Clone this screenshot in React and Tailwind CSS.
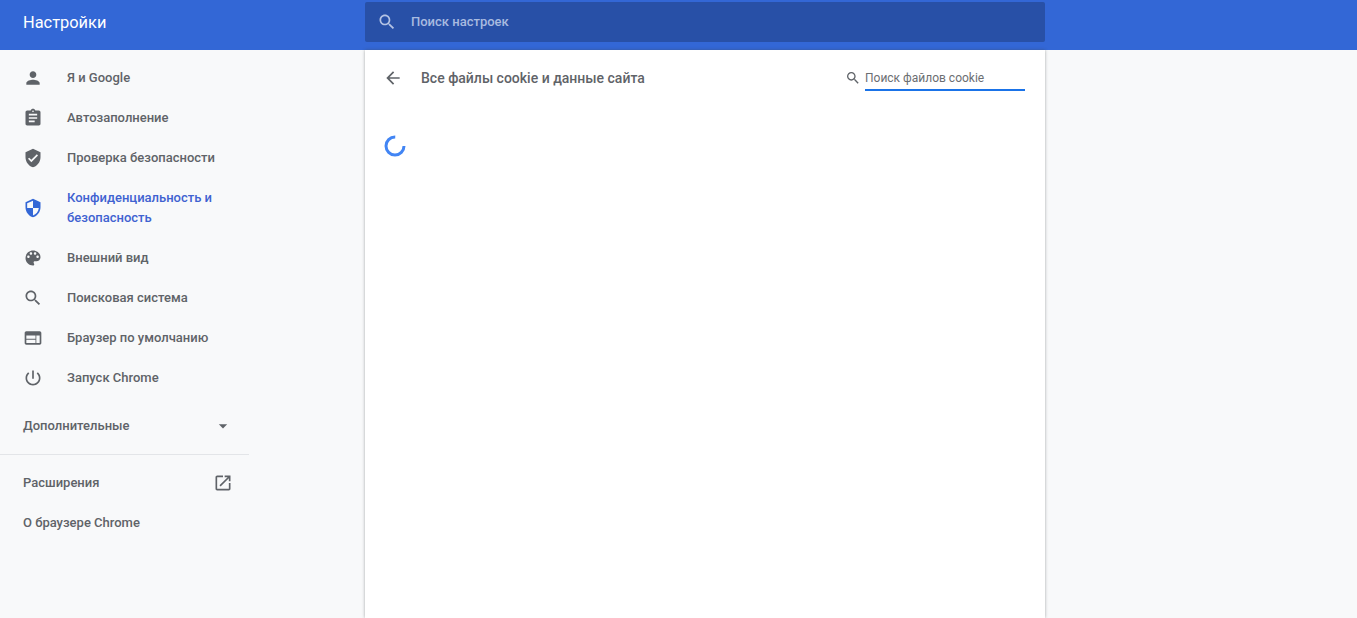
const paths = {
  person: 'M12 12c2.21 0 4-1.79 4-4s-1.79-4-4-4-4 1.79-4 4 1.79 4 4 4zm0 2c-2.67 0-8 1.34-8 4v2h16v-2c0-2.66-5.33-4-8-4z',
  assignment: 'M19 3h-4.18C14.4 1.84 13.3 1 12 1c-1.3 0-2.4.84-2.82 2H5c-1.1 0-2 .9-2 2v14c0 1.1.9 2 2 2h14c1.1 0 2-.9 2-2V5c0-1.1-.9-2-2-2zm-7 0c.55 0 1 .45 1 1s-.45 1-1 1-1-.45-1-1 .45-1 1-1zm2 14H7v-2h7v2zm3-4H7v-2h10v2zm0-4H7V7h10v2z',
  verified: 'M12 1L3 5v6c0 5.55 3.84 10.74 9 12 5.16-1.26 9-6.45 9-12V5l-9-4zm-2 16l-4-4 1.41-1.41L10 14.17l6.59-6.59L18 9l-8 8z',
  security: 'M12 1L3 5v6c0 5.55 3.84 10.74 9 12 5.16-1.26 9-6.45 9-12V5l-9-4zm0 10.99h7c-.53 4.12-3.28 7.79-7 8.94V12H5V6.3l7-3.11v8.8z',
  palette: 'M12 3c-4.97 0-9 4.03-9 9s4.03 9 9 9c.83 0 1.5-.67 1.5-1.5 0-.39-.15-.74-.39-1.01-.23-.26-.38-.61-.38-.99 0-.83.67-1.5 1.5-1.5H16c2.76 0 5-2.24 5-5 0-4.42-4.03-8-9-8zm-5.5 9c-.83 0-1.5-.67-1.5-1.5S5.67 9 6.5 9 8 9.67 8 10.5 7.33 12 6.5 12zm3-4C8.67 8 8 7.33 8 6.5S8.67 5 9.5 5s1.5.67 1.5 1.5S10.33 8 9.5 8zm5 0c-.83 0-1.5-.67-1.5-1.5S13.67 5 14.5 5s1.5.67 1.5 1.5S15.33 8 14.5 8zm3 4c-.83 0-1.5-.67-1.5-1.5S16.67 9 17.5 9s1.5.67 1.5 1.5-.67 1.5-1.5 1.5z',
  search: 'M15.5 14h-.79l-.28-.27C15.41 12.59 16 11.11 16 9.5 16 5.91 13.09 3 9.5 3S3 5.91 3 9.5 5.91 16 9.5 16c1.61 0 3.09-.59 4.23-1.57l.27.28v.79l5 4.99L20.49 19l-4.99-5zm-6 0C7.01 14 5 11.99 5 9.5S7.01 5 9.5 5 14 7.01 14 9.5 11.99 14 9.5 14z',
  web: 'M20 4H4c-1.1 0-1.99.9-1.99 2L2 18c0 1.1.9 2 2 2h16c1.1 0 2-.9 2-2V6c0-1.1-.9-2-2-2zm-5 14H4v-4h11v4zm0-5H4V9h11v4zm5 5h-4V9h4v9z',
  power: 'M13 3h-2v10h2V3zm4.83 2.17l-1.42 1.42C17.99 7.86 19 9.81 19 12c0 3.87-3.13 7-7 7s-7-3.13-7-7c0-2.19 1.01-4.14 2.58-5.42L6.17 5.17C4.23 6.82 3 9.26 3 12c0 4.97 4.03 9 9 9s9-4.03 9-9c0-2.74-1.23-5.18-3.17-6.83z',
  openNew: 'M19 19H5V5h7V3H5c-1.11 0-2 .9-2 2v14c0 1.1.89 2 2 2h14c1.1 0 2-.9 2-2v-7h-2v7zM14 3v2h3.59l-9.83 9.83 1.41 1.41L19 6.41V10h2V3h-7z',
  back: 'M20 11H7.83l5.59-5.59L12 4l-8 8 8 8 1.41-1.41L7.83 13H20v-2z',
  drop: 'M7 10l5 5 5-5z',
};

const Icon = ({ name, className }) => (
  <svg viewBox="0 0 24 24" className={className} fill="currentColor">
    <path d={paths[name]} />
  </svg>
);

const menu = [
  { icon: 'person', label: 'Я и Google' },
  { icon: 'assignment', label: 'Автозаполнение' },
  { icon: 'verified', label: 'Проверка безопасности' },
  { icon: 'security', label: 'Конфиденциальность и безопасность', active: true },
  { icon: 'palette', label: 'Внешний вид' },
  { icon: 'search', label: 'Поисковая система' },
  { icon: 'web', label: 'Браузер по умолчанию' },
  { icon: 'power', label: 'Запуск Chrome' },
];

const Sidebar = () => (
  <aside className="w-[365px] shrink-0 pt-2">
    <nav>
      {menu.map((item) => (
        <div
          key={item.label}
          className={`flex items-center pl-[23px] w-[249px] ${item.active ? 'h-[60px] text-[#3f62d1]' : 'h-10 text-[#5f6368]'}`}
        >
          <Icon name={item.icon} className={`w-5 h-5 shrink-0 ${item.active ? 'text-[#3367d6]' : 'text-[#5f6368]'}`} />
          <span className="ml-[24px] w-[160px] leading-5">{item.label}</span>
        </div>
      ))}
    </nav>
    <div className="w-[249px] mt-2 h-10 flex items-center justify-between pl-[23px] pr-[16px] text-[#5f6368]">
      <span>Дополнительные</span>
      <Icon name="drop" className="w-5 h-5 text-[#5f6368]" />
    </div>
    <div className="w-[249px] mt-2 border-t border-[#e3e5e8]" />
    <div className="w-[249px] mt-2 h-10 flex items-center justify-between pl-[23px] pr-[16px] text-[#5f6368]">
      <span>Расширения</span>
      <Icon name="openNew" className="w-5 h-5 text-[#5f6368]" />
    </div>
    <div className="w-[249px] h-10 flex items-center pl-[23px] text-[#5f6368]">О браузере Chrome</div>
  </aside>
);

export default function App() {
  return (
    <div className="h-[618px] overflow-hidden bg-[#f8f9fa] font-[Roboto,sans-serif] text-[13px] font-medium flex flex-col">
      <header className="h-[50px] shrink-0 bg-[#3367d6] flex items-start">
        <div className="w-[365px] shrink-0 pl-[23px] pt-[11px] text-white text-[16.4px] font-normal leading-6">Настройки</div>
        <div className="mt-[2px] w-[680px] h-10 rounded-[2px] bg-[#2850a7] flex items-center pl-[12px]">
          <Icon name="search" className="w-5 h-5 text-[#b4c3e4]" />
          <span className="ml-[14px] text-[#a9bbe0]">Поиск настроек</span>
        </div>
      </header>
      <div className="flex flex-1 min-h-0">
        <Sidebar />
        <main className="w-[680px] shrink-0 bg-white shadow-[0_0_3px_rgba(60,64,67,0.45)]">
          <div className="h-14 flex items-center pl-[18px] pr-5">
            <Icon name="back" className="w-5 h-5 text-[#5f6368]" />
            <h1 className="ml-[18px] mt-[1px] text-[#5f6368] text-[14px] font-medium flex-1">Все файлы cookie и данные сайта</h1>
            <Icon name="search" className="w-4 h-4 text-[#5f6368] mr-[4px] -mt-px" />
            <div className="w-40 h-[22px] mt-[4px] border-b-2 border-[#1a73e8] font-normal text-[#6b6e72] text-[12px] leading-[18px]">Поиск файлов cookie</div>
          </div>
          <div className="pl-[19px] pt-[29px]">
            <svg viewBox="0 0 22 22" className="w-[22px] h-[22px]" fill="none">
              <circle cx="11" cy="11" r="9" stroke="#4285f4" strokeWidth="3" strokeDasharray="42.4 14.2" />
            </svg>
          </div>
        </main>
      </div>
    </div>
  );
}
